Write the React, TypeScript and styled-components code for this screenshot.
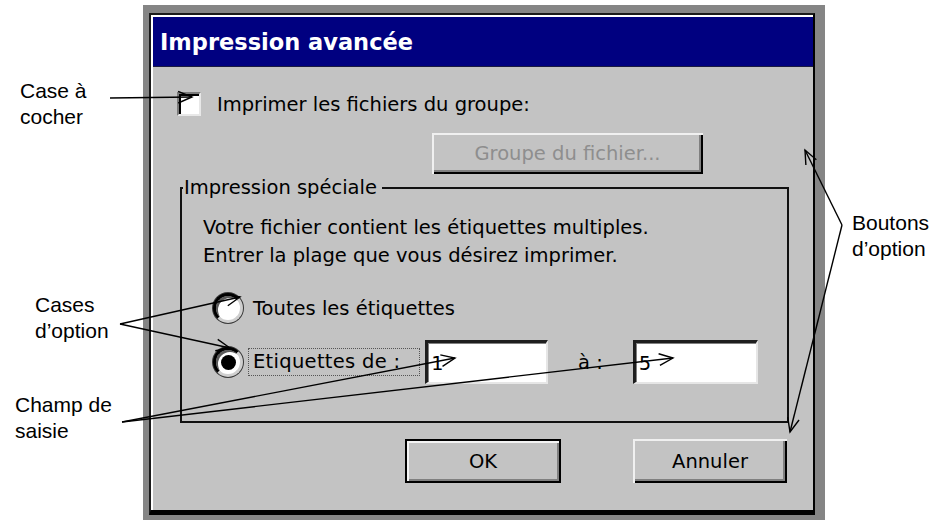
import React from "react";
import styled, { createGlobalStyle } from "styled-components";

const GlobalStyle = createGlobalStyle`
  html, body {
    margin: 0;
    padding: 0;
    background: #ffffff;
  }
  body {
    width: 934px;
    height: 520px;
    overflow: hidden;
  }
`;

const UI_FONT = `"DejaVu Sans", Verdana, sans-serif`;
const FACE = "#c3c3c3";

const Stage = styled.div`
  position: relative;
  width: 934px;
  height: 520px;
  box-sizing: border-box;
  padding: 5px 0 0 143px;
  font-family: ${UI_FONT};
  font-size: 19.5px;
  color: #000;
`;

const Frame = styled.div`
  width: 682px;
  height: 515px;
  box-sizing: border-box;
  background: #858585;
  padding: 8px 10px 5px 6px;
  display: flex;
`;

const Window = styled.div`
  flex: 1;
  display: flex;
  flex-direction: column;
  background: #ffffff;
  border-style: solid;
  border-width: 2px 2px 5px 2px;
  border-color: #1a1a1a #000 #000 #1a1a1a;
  padding: 2px 0 0 2px;
`;

const TitleBar = styled.div`
  flex-shrink: 0;
  height: 50px;
  background: #000080;
  color: #ffffff;
  font-weight: bold;
  font-size: 22.5px;
  display: flex;
  align-items: center;
  padding-left: 7px;
  border-bottom: 1px solid #1a1a40;
  box-sizing: border-box;
`;

const Body = styled.div`
  flex: 1;
  background: ${FACE};
  display: flex;
  flex-direction: column;
  align-items: flex-start;
  padding: 25px 0 0 24px;
`;

const CheckRow = styled.label`
  display: flex;
  align-items: center;
  gap: 16px;
  height: 24px;
`;

const CheckBox = styled.span`
  width: 24px;
  height: 24px;
  box-sizing: border-box;
  background: #ffffff;
  border-style: solid;
  border-width: 2px;
  border-color: #7a7a7a #e8e8e8 #e8e8e8 #7a7a7a;
  box-shadow: inset 2px 2px 0 #000;
`;

const Button = styled.div<{ $disabled?: boolean; $default?: boolean; $w: number }>`
  width: ${({ $w }) => $w}px;
  height: 44px;
  box-sizing: border-box;
  display: flex;
  align-items: center;
  justify-content: center;
  background: ${FACE};
  color: ${({ $disabled }) => ($disabled ? "#8e8e8e" : "#000")};
  border: ${({ $default }) => ($default ? "2px solid #000" : "none")};
  box-shadow: ${({ $default }) =>
    $default
      ? "inset 2px 2px 0 #f4f4f4, inset -2px -2px 0 #808080"
      : "inset 2px 2px 0 #f0f0f0, inset -2px -2px 0 #000, inset -4px -4px 0 #808080"};
`;

const GroupButton = styled(Button)`
  height: 41px;
  margin: 17px 0 0 255px;
`;

const GroupBox = styled.fieldset`
  margin: 2px 0 0 3px;
  width: 609px;
  box-sizing: border-box;
  min-width: 0;
  border: 2px solid #111;
  padding: 14px 0 37px 21px;
`;

const Legend = styled.legend`
  line-height: 24px;
  padding: 0 5px 0 1px;
  margin-left: -20px;
`;

const Info = styled.div`
  line-height: 28px;
  white-space: nowrap;
`;

const OptionRow = styled.div<{ $top: number }>`
  display: flex;
  align-items: center;
  height: 44px;
  margin-top: ${({ $top }) => $top}px;
  padding-left: 10px;
`;

const Radio = styled.span`
  width: 30px;
  height: 30px;
  flex-shrink: 0;
  box-sizing: border-box;
  border-radius: 50%;
  background: #ffffff;
  border: 3px solid;
  border-color: #000 #cfcfcf #cfcfcf #000;
  box-shadow: inset 2px 2px 0 #5a5a5a, 0 0 0 1px #3a3a3a;
  display: flex;
  align-items: center;
  justify-content: center;
  margin-right: 10px;
`;

const RadioDot = styled.span`
  width: 15px;
  height: 15px;
  border-radius: 50%;
  background: #000;
`;

const FocusLabel = styled.span`
  width: 172px;
  box-sizing: border-box;
  margin-left: -5px;
  padding: 1px 4px 2px;
  border: 1px dotted #555;
  white-space: nowrap;
  letter-spacing: 0.3px;
`;

const Field = styled.div<{ $w: number; $gap: number }>`
  width: ${({ $w }) => $w}px;
  height: 44px;
  margin-left: ${({ $gap }) => $gap}px;
  box-sizing: border-box;
  background: #ffffff;
  border-style: solid;
  border-width: 3px 2px 2px 3px;
  border-color: #1e1e1e #e6e6e6 #e6e6e6 #1e1e1e;
  box-shadow: inset 1px 1px 0 #808080;
  display: flex;
  align-items: center;
  padding-left: 3px;
  font-family: "DejaVu Sans Mono", "Liberation Mono", monospace;
  font-size: 20px;
`;

const ToLabel = styled.span`
  width: 55px;
  margin-left: 30px;
`;

const ButtonRow = styled.div`
  align-self: stretch;
  display: flex;
  justify-content: flex-end;
  gap: 72px;
  margin-top: 16px;
  padding-right: 26px;
`;

const Note = styled.div<{ $x: number; $y: number }>`
  position: absolute;
  left: ${({ $x }) => $x}px;
  top: ${({ $y }) => $y}px;
  font-family: "Liberation Sans", Arial, sans-serif;
  font-size: 21px;
  line-height: 26px;
  color: #000;
  white-space: nowrap;
`;

const Overlay = styled.svg`
  position: absolute;
  left: 0;
  top: 0;
  pointer-events: none;
`;

type Pt = [number, number];

const Arrow = ({ from, to }: { from: Pt; to: Pt }) => {
  const [x1, y1] = from;
  const [x2, y2] = to;
  const a = Math.atan2(y2 - y1, x2 - x1);
  const len = 15;
  const spread = 0.4;
  const h1: Pt = [x2 - len * Math.cos(a - spread), y2 - len * Math.sin(a - spread)];
  const h2: Pt = [x2 - len * Math.cos(a + spread), y2 - len * Math.sin(a + spread)];
  return (
    <g>
      <line x1={x1} y1={y1} x2={x2} y2={y2} />
      <polyline points={`${h1[0]},${h1[1]} ${x2},${y2} ${h2[0]},${h2[1]}`} fill="none" />
    </g>
  );
};

const callouts: { from: Pt; to: Pt }[] = [
  { from: [110, 98], to: [192, 97] },
  { from: [120, 324], to: [240, 297] },
  { from: [120, 324], to: [230, 348] },
  { from: [122, 422], to: [455, 358] },
  { from: [122, 422], to: [673, 358] },
  { from: [842, 225], to: [805, 150] },
  { from: [842, 225], to: [790, 432] },
];

export default function App() {
  return (
    <>
      <GlobalStyle />
      <Stage>
        <Frame>
          <Window>
            <TitleBar>Impression avancée</TitleBar>
            <Body>
              <CheckRow>
                <CheckBox />
                <span>Imprimer les fichiers du groupe:</span>
              </CheckRow>
              <GroupButton $w={271} $disabled>
                Groupe du fichier...
              </GroupButton>
              <GroupBox>
                <Legend>Impression spéciale</Legend>
                <Info>Votre fichier contient les étiquettes multiples.</Info>
                <Info>Entrer la plage que vous désirez imprimer.</Info>
                <OptionRow $top={16}>
                  <Radio />
                  <span>Toutes les étiquettes</span>
                </OptionRow>
                <OptionRow $top={10}>
                  <Radio>
                    <RadioDot />
                  </Radio>
                  <FocusLabel>Etiquettes de :</FocusLabel>
                  <Field $w={123} $gap={5}>1</Field>
                  <ToLabel>à :</ToLabel>
                  <Field $w={125} $gap={0}>5</Field>
                </OptionRow>
              </GroupBox>
              <ButtonRow>
                <Button $w={156} $default>
                  OK
                </Button>
                <Button $w={154}>Annuler</Button>
              </ButtonRow>
            </Body>
          </Window>
        </Frame>

        <Note $x={20} $y={78}>
          Case à<br />
          cocher
        </Note>
        <Note $x={35} $y={292}>
          Cases<br />
          d’option
        </Note>
        <Note $x={15} $y={392}>
          Champ de<br />
          saisie
        </Note>
        <Note $x={852} $y={210}>
          Boutons<br />
          d’option
        </Note>

        <Overlay width={934} height={520} viewBox="0 0 934 520" stroke="#000" strokeWidth={1.4}>
          {callouts.map((c, i) => (
            <Arrow key={i} from={c.from} to={c.to} />
          ))}
        </Overlay>
      </Stage>
    </>
  );
}
